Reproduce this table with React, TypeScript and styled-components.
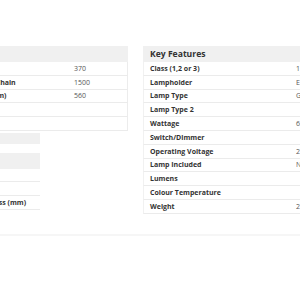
import React from "react";
import styled, { createGlobalStyle } from "styled-components";

const Global = createGlobalStyle`
  html, body { margin: 0; padding: 0; background: #ffffff; overflow: hidden; }
  body { font-family: "Open Sans", "Liberation Sans", sans-serif; color: #333; }
`;

const Page = styled.div`
  width: 300px;
  height: 300px;
  overflow: hidden;
  padding-top: 46px;
  box-sizing: border-box;
`;

const Columns = styled.div`
  display: flex;
  gap: 15px;
  margin-left: -79px;
  align-items: flex-start;
`;

const Column = styled.div`
  width: 207px;
  flex: none;
  display: flex;
  flex-direction: column;
`;

const Table = styled.div`
  display: flex;
  flex-direction: column;
`;

const Header = styled.div`
  height: 16px;
  background: #f0f0f0;
  padding-left: 7px;
  display: flex;
  align-items: center;
  font-size: 8.6px;
  font-weight: 700;
  color: #333;
  white-space: nowrap;
`;

const Row = styled.div`
  height: 13.8px;
  box-sizing: border-box;
  display: grid;
  grid-template-columns: 146px 1fr;
  align-items: center;
  padding-left: 6px;
  border-left: 1px solid #f1f1f1;
  border-right: 1px solid #ececec;
  border-bottom: 1px solid #ebebeb;
  white-space: nowrap;
`;

const Label = styled.span`
  font-size: 7px;
  font-weight: 700;
  color: #333;
`;

const Value = styled.span`
  font-size: 7px;
  color: #555;
`;

const Lower = styled.div`
  width: 119px;
  margin-top: 2px;
  display: flex;
  flex-direction: column;
`;

const Bar = styled.div<{ $h: number; $gap: number }>`
  height: ${(p) => p.$h}px;
  margin-bottom: ${(p) => p.$gap}px;
  background: #f0f0f0;
`;

const LowerRow = styled.div<{ $h: number }>`
  height: ${(p) => p.$h}px;
  box-sizing: border-box;
  display: flex;
  align-items: center;
  padding-left: 7px;
  border-bottom: 1px solid #ebebeb;
  white-space: nowrap;
`;

const FooterBand = styled.div`
  margin-top: 20px;
  height: 2px;
  background: #f6f6f6;
`;

const leftRows: [string, string][] = [
  ["Height (mm)", "370"],
  ["Full Drop Including Chain", "1500"],
  ["Maximum Width (mm)", "560"],
  ["Depth (mm)", ""],
  ["", ""],
];

const rightRows: [string, string][] = [
  ["Class (1,2 or 3)", "1"],
  ["Lampholder", "E27"],
  ["Lamp Type", "GLS"],
  ["Lamp Type 2", ""],
  ["Wattage", "60W"],
  ["Switch/Dimmer", ""],
  ["Operating Voltage", "230V"],
  ["Lamp Included", "No"],
  ["Lumens", ""],
  ["Colour Temperature", ""],
  ["Weight", "2.1kg"],
];

export default function App() {
  return (
    <Page>
      <Global />
      <Columns>
        <Column>
          <Table>
            <Header>Dimensions</Header>
            {leftRows.map(([l, v], i) => (
              <Row key={i}>
                <Label>{l}</Label>
                <Value>{v}</Value>
              </Row>
            ))}
          </Table>
          <Lower>
            <Bar $h={11} $gap={9} />
            <Bar $h={16} $gap={0} />
            <LowerRow $h={13}>
              <Label></Label>
            </LowerRow>
            <LowerRow $h={14}>
              <Label></Label>
            </LowerRow>
            <LowerRow $h={14}>
              <Label>Shade Glass Thickness (mm)</Label>
            </LowerRow>
          </Lower>
        </Column>
        <Column>
          <Table>
            <Header>Key Features</Header>
            {rightRows.map(([l, v], i) => (
              <Row key={i}>
                <Label>{l}</Label>
                <Value>{v}</Value>
              </Row>
            ))}
          </Table>
        </Column>
      </Columns>
      <FooterBand />
    </Page>
  );
}
